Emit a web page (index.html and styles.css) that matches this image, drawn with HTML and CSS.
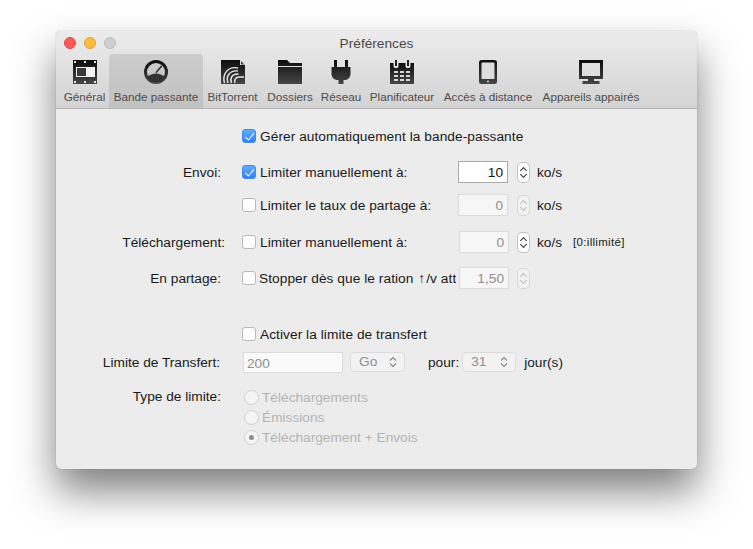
FILE: index.html
```html
<!DOCTYPE html>
<html lang="fr">
<head>
<meta charset="utf-8">
<title>Préférences</title>
<link rel="stylesheet" href="styles.css">
</head>
<body>
<div class="window">
  <header class="chrome">
    <div class="titlebar">
      <div class="lights"><i class="light red"></i><i class="light yellow"></i><i class="light grey"></i></div>
      <div class="title">Préférences</div>
    </div>
    <nav class="toolbar">
      <div class="tool t1">
        <svg class="icon" viewBox="0 0 24 24"><defs><linearGradient id="g" x1="0" y1="0" x2="0" y2="1"><stop offset="0" stop-color="#0d0d0d"/><stop offset="1" stop-color="#474747"/></linearGradient></defs>
          <rect width="24" height="24" fill="url(#g)"/>
          <path d="M1 1h2v2H1zM11 1h2v2h-2zM21 1h2v2h-2zM1 21h2v2H1zM11 21h2v2h-2zM21 21h2v2h-2z" fill="#e4e4e4"/>
          <rect x="3" y="7" width="19" height="10" fill="#f2f2f2"/><rect x="4" y="8" width="9" height="8" fill="#3a3a3a"/>
        </svg>
        <span>Général</span>
      </div>
      <div class="tool t2 active">
        <svg class="icon" viewBox="0 0 24 24">
          <circle cx="12" cy="12" r="10.500" fill="none" stroke="url(#g)" stroke-width="3"/>
          <path d="M3 17.500C5.500 14.500 9 13.500 12 13.500s6.500 1 9 4L17 22H7z" fill="#333"/>
          <path d="M11.300 12.500L17 5.500l1.200 1-5.700 6.500z" fill="#262626"/>
        </svg>
        <span>Bande passante</span>
      </div>
      <div class="tool t3">
        <svg class="icon" viewBox="0 0 24 24">
          <path d="M0 0h19v5h5v19H0z" fill="url(#g)"/><path d="M20 1l3.500 3.500H20z" fill="#444"/>
          <g fill="none" stroke="#e6e6e6" stroke-width="1.400"><path d="M3.500 23C1 14 7 6 17 8"/><path d="M7 23c-2.500-7 2-13 10-12"/><path d="M10.500 23c-2-5 1-9.500 7-9"/><path d="M14 23c-1-3 .5-6 4-6h5"/></g>
        </svg>
        <span>BitTorrent</span>
      </div>
      <div class="tool t4">
        <svg class="icon" viewBox="0 0 24 24">
          <path d="M0 0h9l3 3h12v3H0zM0 7h24v17H0z" fill="url(#g)"/>
        </svg>
        <span>Dossiers</span>
      </div>
      <div class="tool t5">
        <svg class="icon" viewBox="0 0 24 24">
          <path d="M5 0h3v7h8V0h3v7h2.500v7c0 3-2 5.500-5 6h-2v4h-5v-4H7.500c-3-.5-5-3-5-6V7H5z" fill="url(#g)"/>
        </svg>
        <span>Réseau</span>
      </div>
      <div class="tool t6">
        <svg class="icon" viewBox="0 0 24 24">
          <path d="M0 3h3.500v3c0 3 5 3 5 0V3h7v3c0 3 5 3 5 0V3H24v21H0z" fill="url(#g)"/>
          <path d="M5 0h2v6H5zM17 0h2v6h-2z" fill="#222"/>
          <path d="M4 11h4v2H4zM10 11h4v2h-4zM16 11h4v2h-4zM4 15h4v2H4zM10 15h4v2h-4zM16 15h4v2h-4zM4 19h4v2H4zM10 19h4v2h-4zM16 19h4v2h-4z" fill="#d6d6d6"/>
        </svg>
        <span>Planificateur</span>
      </div>
      <div class="tool t7">
        <svg class="icon" viewBox="0 0 24 24">
          <rect x="3" width="18" height="24" rx="2.500" fill="url(#g)"/><rect x="5.500" y="2.500" width="13" height="16.500" rx="1" fill="#dcdcdc"/><circle cx="12" cy="21.500" r="1" fill="#ddd"/>
        </svg>
        <span>Accès à distance</span>
      </div>
      <div class="tool t8">
        <svg class="icon" viewBox="0 0 24 24">
          <path d="M0 0h24v19H15v2h5.500v3h-17v-3H9v-2H0zM3 3v13h18V3z" fill="url(#g)"/>
        </svg>
        <span>Appareils appairés</span>
      </div>
    </nav>
  </header>

  <main class="content">
    <div class="row r1"><div class="label"></div><label class="check on"><i class="box"></i>Gérer automatiquement la bande-passante</label></div>

    <div class="row r2"><div class="label">Envoi:</div><label class="check on slot"><i class="box"></i>Limiter manuellement à:</label>
      <div class="field active-field">10</div><div class="stepper"><b class="up"></b><b class="down"></b></div><span class="unit">ko/s</span></div>

    <div class="row r3"><div class="label"></div><label class="check slot"><i class="box"></i>Limiter le taux de partage à:</label>
      <div class="field off">0</div><div class="stepper dim"><b class="up"></b><b class="down"></b></div><span class="unit">ko/s</span></div>

    <div class="row r4"><div class="label wide">Téléchargement:</div><label class="check slot s2"><i class="box"></i>Limiter manuellement à:</label>
      <div class="field off">0</div><div class="stepper shift"><b class="up"></b><b class="down"></b></div><span class="unit">ko/s</span><span class="hint">[0:illimité]</span></div>

    <div class="row r5"><div class="label">En partage:</div><label class="check slot s2 tight"><i class="box"></i><span class="clip">Stopper dès que le ration <b class="arrow">↑</b>/v atteint</span></label>
      <div class="field off">1,50</div><div class="stepper dim shift"><b class="up"></b><b class="down"></b></div></div>

    <div class="row r6"><div class="label"></div><label class="check"><i class="box"></i>Activer la limite de transfert</label></div>

    <div class="row r7"><div class="label shortlabel">Limite de Transfert:</div>
      <div class="field off longfield">200</div>
      <div class="popup go"><span>Go</span><svg class="updown" viewBox="0 0 8 12"><path d="M1 4.500L4 1.500l3 3M1 7.500l3 3 3-3" fill="none" stroke="#8a8a8a" stroke-width="1.200"/></svg></div>
      <span class="pour">pour:</span>
      <div class="popup days"><span>31</span><svg class="updown" viewBox="0 0 8 12"><path d="M1 4.500L4 1.500l3 3M1 7.500l3 3 3-3" fill="none" stroke="#8a8a8a" stroke-width="1.200"/></svg></div>
      <span class="jours">jour(s)</span></div>

    <div class="row r8"><div class="label">Type de limite:</div>
      <div class="radios">
        <div class="radio"><i class="dot"></i>Téléchargements</div>
        <div class="radio"><i class="dot"></i>Émissions</div>
        <div class="radio sel"><i class="dot"></i>Téléchargement + Envois</div>
      </div>
    </div>
  </main>
</div>
</body>
</html>
```

FILE: styles.css
```css
* { box-sizing: border-box; }
html, body { margin: 0; height: 100%; background: #fff; overflow: hidden; }
body { padding: 31px 56px 0; font-family: "Liberation Sans", Arial, sans-serif; font-size: 13.700px; color: #1a1a1a; }

.window { width: 641px; height: 438px; background: #ececec; border-radius: 5px; box-shadow: 0 22px 40px rgba(0,0,0,.5), 0 0 1px rgba(0,0,0,.45); }

.chrome { height: 78px; background: linear-gradient(#ececec, #d3d3d3); border-bottom: 1px solid #b4b4b4; border-radius: 5px 5px 0 0; }
.titlebar { height: 23px; display: flex; align-items: center; justify-content: center; position: relative; }
.title { color: #4a4a4a; padding-top: 2px; }
.lights { position: absolute; left: 8px; top: 6px; display: flex; gap: 8px; }
.light { width: 12px; height: 12px; border-radius: 50%; display: block; }
.red { background: #fc5b57; border: 1px solid #e5453f; }
.yellow { background: #fdbc40; border: 1px solid #e09e2a; }
.grey { background: #cfcfcf; border: 1px solid #bdbdbd; }

.toolbar { display: flex; height: 54px; }
.tool { display: flex; flex-direction: column; align-items: center; font-size: 11.700px; color: #4d4d4d; white-space: nowrap; padding-top: 6px; border-radius: 4px 4px 0 0; }
.tool span { margin-top: 6px; line-height: 13px; }
.icon { width: 24px; height: 24px; display: block; }
.t1 { margin-left: 4px; width: 49px; }
.t2 { width: 94px; }
.t3 { width: 59px; }
.t4 { width: 54px; margin-left: 1px; }
.t5 { width: 48px; }
.t6 { width: 74px; }
.t7 { width: 98px; }
.t8 { width: 108px; }
.active { background: linear-gradient(#cdcdcd, #c1c1c1); }

.content { padding-top: 16px; }
.row { display: flex; align-items: center; height: 22px; }
.r2 { margin-top: 14px; }
.r3 { margin-top: 11px; }
.r4 { margin-top: 15px; }
.r5 { margin-top: 14px; }
.r6 { margin-top: 34px; }
.r7 { margin-top: 6px; }
.r8 { margin-top: 14px; align-items: flex-start; height: auto; }

.label { width: 165px; margin-right: 21px; text-align: right; white-space: nowrap; }
.wide { width: 169px; margin-right: 17px; }
.shortlabel { width: 164px; margin-right: 23px; }
.r8 .label { line-height: 22px; margin-top: -1px; }

.check { display: flex; align-items: center; white-space: nowrap; letter-spacing: .06px; }
.box { width: 14px; height: 14px; margin-right: 4px; flex: none; border: 1px solid #b8b8b8; border-radius: 3px; background: #fff; display: block; position: relative; }
.on .box { background: linear-gradient(#62acfc, #2f80f6); border-color: #3f8cf0; }
.on .box::after { content: ""; position: absolute; left: 4px; top: 1px; width: 4px; height: 8px; border: solid #fff; border-width: 0 1.500px 1.500px 0; transform: rotate(40deg); }
.slot { width: 216px; }
.s2 { width: 217px; }
.tight .box { margin-right: 3px; }
.clip { display: block; width: 197px; overflow: hidden; }
.arrow { font-weight: bold; margin: 0 1px; }

.field { width: 50px; height: 22px; flex: none; background: #fff; border: 1px solid #c9c9c9; text-align: right; padding-right: 4px; line-height: 22px; }
.active-field { border-color: #a9a9a9; color: #111; }
.off { background: #f6f6f6; border-color: #dadada; color: #8f8f8f; }
.longfield { width: 100px; height: 21px; text-align: left; padding: 0 0 0 3px; line-height: 21px; background: #fafafa; }

.stepper { width: 13px; height: 21px; margin-left: 9px; flex: none; background: #fff; border: 1px solid #c0c0c0; border-radius: 5px; position: relative; }
.shift { margin-left: 8px; }
.dim { background: #f1f1f1; border-color: #d8d8d8; }
.stepper b { position: absolute; left: 3px; width: 5px; height: 5px; border: solid #333; border-width: 1.200px 0 0 1.200px; }
.stepper .up { top: 5px; transform: rotate(45deg); }
.stepper .down { bottom: 5px; transform: rotate(225deg); }
.dim b { border-color: #bcbcbc; }

.unit { margin-left: 7px; color: #1a1a1a; }
.hint { margin-left: 11px; font-size: 11.500px; letter-spacing: .3px; color: #222; }

.popup { height: 20px; background: #f2f2f2; border: 1px solid #dcdcdc; border-radius: 4px; display: flex; align-items: center; justify-content: space-between; color: #8f8f8f; flex: none; margin-top: -1px; }
.go { width: 55px; margin-left: 7px; padding: 0 7px 0 8px; }
.days { width: 54px; margin-left: 3px; padding: 0 7px 0 8px; }
.updown { width: 8px; height: 12px; display: block; }
.pour { margin-left: 23px; }
.jours { margin-left: 8px; }

.radios { display: flex; flex-direction: column; }
.radio { height: 20px; display: flex; align-items: center; color: #b4b4b4; }
.dot { width: 15px; height: 15px; margin: 0 3px 0 2px; border: 1px solid #cfcfcf; border-radius: 50%; background: #f5f5f5; display: block; position: relative; }
.sel .dot::after { content: ""; position: absolute; left: 4px; top: 4px; width: 5px; height: 5px; border-radius: 50%; background: #8e8e8e; }
```
